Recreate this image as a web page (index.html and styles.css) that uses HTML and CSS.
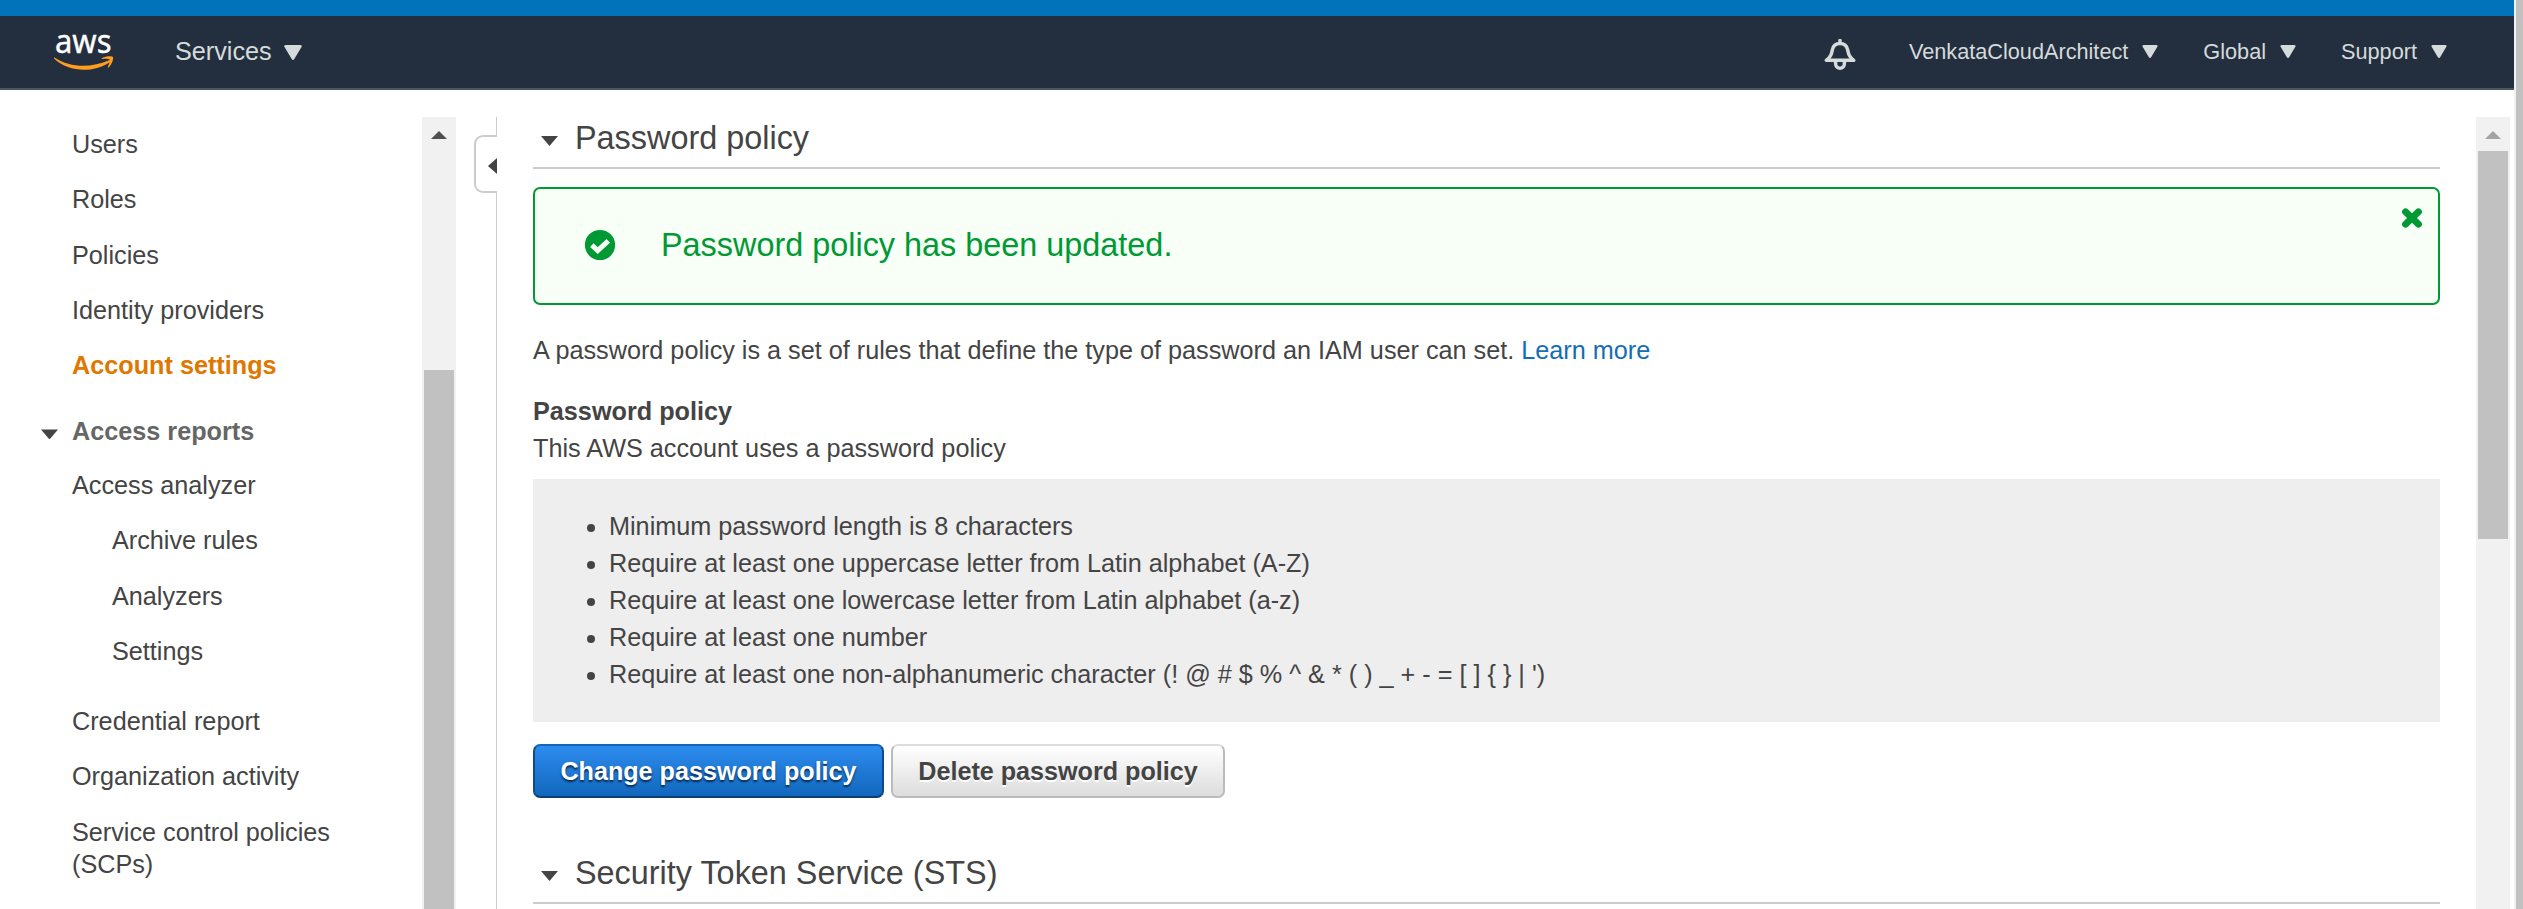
FILE: index.html
```html
<!DOCTYPE html>
<html lang="en">
<head>
<meta charset="utf-8">
<title>IAM Management Console</title>
<link rel="stylesheet" href="styles.css">
</head>
<body>
<div class="window">
  <div class="app">
    <div class="accent"></div>
    <header class="topnav">
      <svg class="logo" viewBox="0 -16 64 64" width="64" height="64" aria-label="aws">
        <text class="logo-text" x="1" y="19.500" textLength="56.500" lengthAdjust="spacingAndGlyphs">aws</text>
        <path fill="#ff9d1e" d="M0.5 24.5C17 35.5 38 34.5 54.500 27.500C56.300 26.800 57 28.300 55.300 29.400C39 40 15 39.500 0 25.500C-.2 24.800 0 24.200 .5 24.500Z"/>
        <path fill="#ff9d1e" d="M48 25C52 22.800 58.300 23 59 24C59.700 25.800 58 31.500 54.600 34.500C54 35 53.600 34.700 53.900 34C55 31 56.300 27.500 55.500 26.500C54.600 25.500 51 25.700 48.400 26C47.600 26 47.500 25.400 48 25Z"/>
      </svg>
      <div class="menu services"><span>Services</span><svg class="caret-lg" viewBox="0 0 18 15"><path d="M1.500 0H16.500Q18.500 .5 17.500 2L10.300 14Q9 15.800 7.700 14L.5 2Q-.5 .5 1.500 0Z"/></svg></div>
      <div class="spacer"></div>
      <svg class="bell" viewBox="0 0 32 32" width="32" height="32"><path d="M16 1.500V4M2.300 21.300C7 17.500 7.500 15 8.300 11C9.200 6.500 12 4.600 16 4.600S22.800 6.500 23.700 11C24.500 15 25 17.500 29.700 21.300Z"/><path d="M11.600 22V24.800A4.400 4.400 0 0 0 20.400 24.800V22"/></svg>
      <div class="menu account"><span>VenkataCloudArchitect</span><svg class="caret" viewBox="0 0 18 15"><path d="M1.500 0H16.500Q18.500 .5 17.500 2L10.300 14Q9 15.800 7.700 14L.5 2Q-.5 .5 1.500 0Z"/></svg></div>
      <div class="menu region"><span>Global</span><svg class="caret" viewBox="0 0 18 15"><path d="M1.500 0H16.500Q18.500 .5 17.500 2L10.300 14Q9 15.800 7.700 14L.5 2Q-.5 .5 1.500 0Z"/></svg></div>
      <div class="menu support"><span>Support</span><svg class="caret" viewBox="0 0 18 15"><path d="M1.500 0H16.500Q18.500 .5 17.500 2L10.300 14Q9 15.800 7.700 14L.5 2Q-.5 .5 1.500 0Z"/></svg></div>
    </header>
    <div class="body">
      <nav class="sidebar">
        <ul class="links">
          <li>Users</li>
          <li>Roles</li>
          <li>Policies</li>
          <li>Identity providers</li>
          <li class="active">Account settings</li>
        </ul>
        <div class="group"><span class="tri"></span>Access reports</div>
        <ul class="links">
          <li>Access analyzer</li>
          <li class="sub">Archive rules</li>
          <li class="sub">Analyzers</li>
          <li class="sub last">Settings</li>
          <li>Credential report</li>
          <li>Organization activity</li>
          <li>Service control policies (SCPs)</li>
        </ul>
      </nav>
      <div class="scroll side-scroll"><span class="up"></span><span class="thumb"></span></div>
      <div class="gutter"><div class="handle"><span class="left"></span></div></div>
      <main class="content">
        <h2 class="heading"><span class="tri"></span>Password policy</h2>
        <div class="alert">
          <svg class="ok" viewBox="0 0 32 32"><circle cx="16" cy="16" r="15.100"/><path d="M7.800 16.200L13.700 21.700L24.300 11.800"/></svg>
          <span class="alert-text">Password policy has been updated.</span>
          <svg class="close" viewBox="0 0 22 20"><path d="M4.500 3.800L17.500 16.200M17.500 3.800L4.500 16.200"/></svg>
        </div>
        <p class="intro">A password policy is a set of rules that define the type of password an IAM user can set. <a>Learn more</a></p>
        <h3 class="subhead">Password policy</h3>
        <p class="uses">This AWS account uses a password policy</p>
        <ul class="rules">
          <li>Minimum password length is 8 characters</li>
          <li>Require at least one uppercase letter from Latin alphabet (A-Z)</li>
          <li>Require at least one lowercase letter from Latin alphabet (a-z)</li>
          <li>Require at least one number</li>
          <li>Require at least one non-alphanumeric character (! @ # $ % ^ &amp; * ( ) _ + - = [ ] { } | ')</li>
        </ul>
        <div class="actions">
          <button class="btn primary">Change password policy</button>
          <button class="btn">Delete password policy</button>
        </div>
        <h2 class="heading second"><span class="tri"></span>Security Token Service (STS)</h2>
      </main>
      <div class="scroll main-scroll"><span class="up"></span><span class="thumb"></span></div>
    </div>
  </div>
  <div class="window-scroll"></div>
</div>
</body>
</html>
```
FILE: styles.css
```css
* { box-sizing: border-box; }
body { margin: 0; background: #fff; color: #444; font: 25.23px/37px "Liberation Sans", Arial, sans-serif; }
ul, p, h2, h3 { margin: 0; padding: 0; }
.window { display: flex; width: 2523px; height: 909px; overflow: hidden; }
.app { display: flex; flex-direction: column; width: 2514px; }
.window-scroll { width: 9px; border-left: 2px solid #f1f1f1; background: #c1c1c1; }
.accent { height: 16px; flex: none; background: #0073bb; }
.topnav { display: flex; height: 74px; flex: none; padding: 0 67px 0 54px; background: #232f3e; border-bottom: 2px solid #4d5463; color: #d5dbdb; }
.logo { margin-top: 1px; flex: none; }
.logo-text { font: 33px "Noto Sans", sans-serif; fill: #fff; stroke: #fff; stroke-width: .4; }
.menu { display: flex; align-items: flex-start; padding-top: 17px; font-size: 21.7px; white-space: nowrap; }
.menu svg { flex: none; fill: #d5dbdb; }
.services { font-size: 25.23px; margin-left: 57px; }
.caret-lg { width: 18px; height: 15px; margin: 12px 0 0 12px; }
.caret { width: 16px; height: 13px; margin: 12px 0 0 14px; }
.spacer { flex: 1; }
.bell { margin: 23px 53px 0 0; fill: none; stroke: #d5dbdb; stroke-width: 3.5; stroke-linejoin: round; stroke-linecap: round; }
.region, .support { margin-left: 45px; }
.body { display: flex; height: 819px; flex: none; padding-top: 27px; }
.sidebar { width: 422px; }
.links { list-style: none; padding-left: 72px; }
.links li { height: 55.3px; padding: 11.2px 0; line-height: 32px; width: 340px; }
.links li.active { color: #e07700; font-weight: bold; }
.links .sub { margin-left: 40px; width: auto; }
.links .last { margin-bottom: 14.8px; }
.group { display: flex; align-items: center; height: 34px; margin: 21.5px 0 8.8px 41px; color: #666; font-weight: bold; gap: 14px; }
.tri { flex: none; width: 17px; height: 10px; background: #444; clip-path: polygon(0 0, 100% 0, 50% 100%); }
.group .tri { margin-top: 5px; }
.scroll { display: flex; flex-direction: column; align-items: center; flex: none; width: 34px; padding-top: 14px; background: #f1f1f1; }
.up { flex: none; width: 16px; height: 8px; background: #505050; clip-path: polygon(50% 0, 100% 100%, 0 100%); }
.thumb { flex: none; width: 30px; background: #c1c1c1; }
.side-scroll .thumb { margin-top: 231px; height: 539px; }
.main-scroll .up { background: #a3a3a3; }
.main-scroll .thumb { margin-top: 12px; height: 388px; }
.gutter { width: 41px; margin-right: 36px; padding: 18px 0 0 18px; background: linear-gradient(#ccc, #ccc) 100% 0 / 1px 100% no-repeat; }
.handle { display: flex; align-items: center; justify-content: flex-end; width: 23px; height: 58px; padding-top: 4px; background: #fff; border: 2px solid #ccc; border-right: 0; border-radius: 9px 0 0 9px; }
.left { width: 9px; height: 16px; background: #444; clip-path: polygon(100% 0, 100% 100%, 0 50%); }
.content { width: 1907px; margin-right: 36px; }
.heading { display: flex; align-items: center; height: 52px; padding: 0 0 7px 8px; gap: 17px; border-bottom: 2px solid #ccc; font-size: 32.4px; font-weight: normal; }
.heading .tri { margin-top: 5px; }
.alert { display: flex; height: 118px; margin: 18px 0 27px; border: 2px solid #009933; border-radius: 7px; background: #f7fff7; color: #009933; }
.ok { width: 32px; height: 32px; margin: 40px 0 0 49px; fill: #009933; }
.ok path { fill: none; stroke: #f7fff7; stroke-width: 5; }
.alert-text { flex: 1; margin: 38px 0 0 45px; font-size: 32.4px; }
.close { width: 22px; height: 20px; margin: 19px 15px 0 0; fill: none; stroke: #009933; stroke-width: 6.8; stroke-linecap: round; }
.intro a { color: #146eb4; }
.subhead { margin-top: 24px; font-size: 25.23px; line-height: 37px; }
.rules { height: 243px; margin-top: 12px; padding: 29px 0 0 76px; background: #eee; }
.actions { display: flex; gap: 7px; margin-top: 22px; }
.btn { width: 334px; height: 54px; padding: 0; border: 2px solid #bbb; border-top-color: #ddd; border-radius: 7px; background: linear-gradient(#fff, #ddd); background-clip: padding-box; color: #444; font: bold 25.15px "Liberation Sans", Arial, sans-serif; text-shadow: 0 2px 0 #fff; white-space: nowrap; }
.btn.primary { width: 351px; border-color: #1166bb #0f4a8a #0a3f78; background: linear-gradient(#2e8df0, #1166bb) border-box; color: #fff; text-shadow: 0 2px 2px #0a2a50; }
.second { margin-top: 54px; }
```
